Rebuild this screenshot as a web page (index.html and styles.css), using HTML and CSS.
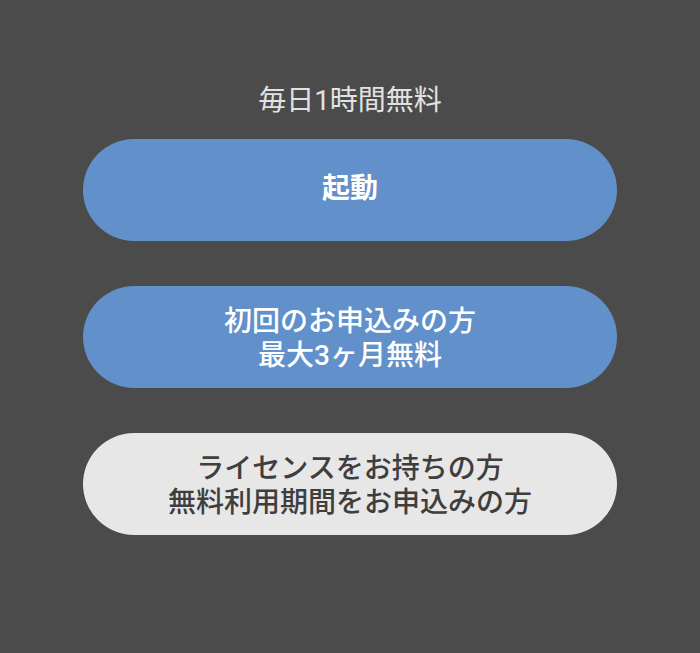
FILE: index.html
```html
<!DOCTYPE html>
<html lang="ja">
<head>
  <meta charset="UTF-8" />
  <title>起動</title>
  <link rel="stylesheet" href="styles.css">
</head>
<body>
  <div class="launcher">
    <p class="note">毎日1時間無料</p>
    <button class="btn btn-start">起動</button>
    <button class="btn btn-trial">初回のお申込みの方<br>最大3ヶ月無料</button>
    <button class="btn btn-license">ライセンスをお持ちの方<br>無料利用期間をお申込みの方</button>
  </div>
</body>
</html>
```

FILE: styles.css
```css
body {
  margin: 0;
  background-color: #4b4b4b;
  font-family: Roboto, "Noto Sans CJK JP", sans-serif;
}

.launcher {
  width: 534px;
  margin: 0 auto;
  padding-top: 82px;
  display: flex;
  flex-direction: column;
  gap: 45px;
}

.note {
  margin: 0 0 -26px;
  text-align: center;
  color: #e2e2e2;
  font-size: 28px;
  line-height: 38px;
}

.btn {
  height: 102px;
  padding: 3px 0 0;
  border: none;
  border-radius: 51px;
  font-family: inherit;
  font-size: 28px;
  line-height: 34px;
  font-weight: 500;
  cursor: pointer;
}

.btn-start,
.btn-trial {
  background-color: #6190cb;
  color: #ffffff;
}

.btn-start {
  padding: 0 0 2px;
  font-weight: bold;
}

.btn-license {
  background-color: #e7e7e7;
  color: #3e3e3e;
}
```
